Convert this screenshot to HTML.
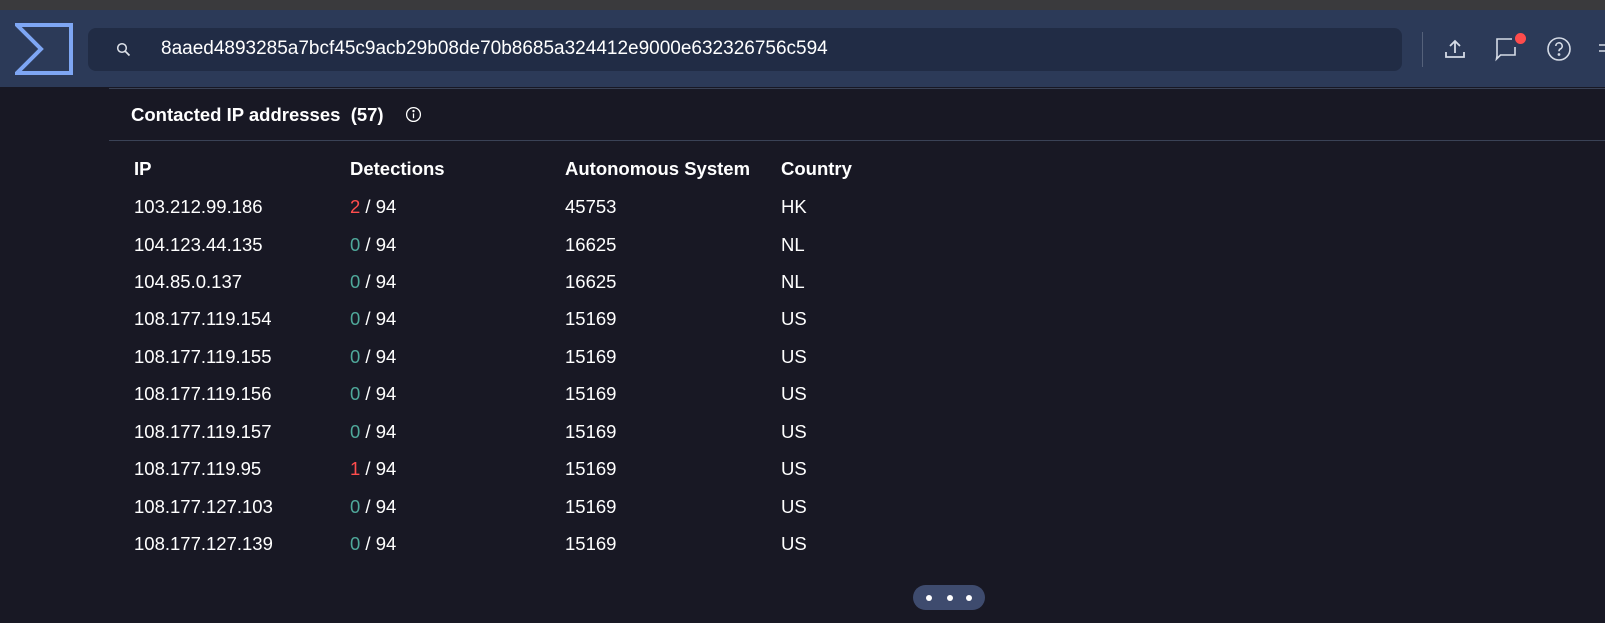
<!DOCTYPE html>
<html><head><style>
body{margin:0;width:1605px;height:623px;background:#181824;font-family:"Liberation Sans",sans-serif;color:#fff;position:relative;overflow:hidden}
.top{position:absolute;left:0;top:0;width:1605px;height:10px;background:#3a3a3d}
.nav{position:absolute;left:0;top:10px;width:1605px;height:77px;background:#2c3a58}
.search{position:absolute;left:88px;top:28px;width:1314px;height:43px;background:#212c45;border-radius:8px}
.hash{position:absolute;left:161px;top:38px;font-size:19px;color:#fff}
.sep{position:absolute;left:1422px;top:32px;width:1px;height:35px;background:#55617a}
.l1{position:absolute;left:109px;top:88px;right:0;height:1px;background:#3a4256}
.l2{position:absolute;left:109px;top:140px;right:0;height:1px;background:#3a4256}
.title{position:absolute;left:131px;top:104px;font-size:18.5px;font-weight:bold}
.c{position:absolute;font-size:18.5px;white-space:nowrap;line-height:22px}
.h{font-weight:bold;top:158px}
.r{color:#ff4d4d}.g{color:#4fa89a}
.pill{position:absolute;left:913px;top:585px;width:72px;height:25px;border-radius:12.5px;background:#3e4b6e}
.dot{position:absolute;top:9.5px;width:6px;height:6px;border-radius:3px;background:#fff}
</style></head><body>
<div class="top"></div>
<div class="nav">
<svg style="position:absolute;left:15px;top:13px" width="58" height="52" viewBox="0 0 58 52"><path d="M2 2 H56 V50 H2 L26 26 Z" fill="none" stroke="#7ea6f4" stroke-width="4"/></svg>
</div>
<div class="search"></div>
<svg style="position:absolute;left:116px;top:42px" width="16" height="16" viewBox="0 0 16 16"><circle cx="6" cy="6" r="4.3" fill="none" stroke="#dfe3ea" stroke-width="1.5"/><path d="M9.2 9.2 L13.5 13.5" stroke="#dfe3ea" stroke-width="1.7"/></svg>
<div class="hash">8aaed4893285a7bcf45c9acb29b08de70b8685a324412e9000e632326756c594</div>
<div class="sep"></div>
<svg style="position:absolute;left:1443px;top:37px" width="24" height="24" viewBox="0 0 24 24" fill="none" stroke="#d5dbe6" stroke-width="1.8"><path d="M12 16V4M7 9l5-5 5 5M3 15v5h18v-5"/></svg>
<svg style="position:absolute;left:1494px;top:35px" width="28" height="28" viewBox="0 0 28 28" fill="none" stroke="#d5dbe6" stroke-width="1.6"><path d="M18 4H3v17l-0.5 3 4-4H21V12"/></svg>
<div style="position:absolute;left:1515px;top:33px;width:11px;height:11px;border-radius:6px;background:#ff4c4c"></div>
<svg style="position:absolute;left:1546px;top:36px" width="26" height="26" viewBox="0 0 26 26" fill="none" stroke="#d5dbe6" stroke-width="1.6"><circle cx="13" cy="13" r="11"/><path d="M9.8 10a3.2 3.2 0 1 1 4.6 2.9c-1 .5-1.4 1.2-1.4 2.3"/><circle cx="13" cy="18.5" r="0.6" fill="#d5dbe6"/></svg>
<svg style="position:absolute;left:1598px;top:39px" width="7" height="20"><path d="M1 6h7M1 12h7" stroke="#d5dbe6" stroke-width="1.6"/></svg>
<div class="l1"></div>
<div class="title">Contacted IP addresses&nbsp;&nbsp;(57)</div>
<svg style="position:absolute;left:405px;top:106px" width="17" height="17" viewBox="0 0 16 16" fill="none" stroke="#fff" stroke-width="1.2"><circle cx="8" cy="8" r="6.5"/><path d="M8 7v4.5"/><circle cx="8" cy="4.8" r="0.5" fill="#fff"/></svg>
<div class="l2"></div>
<div class="c h" style="left:134px">IP</div>
<div class="c h" style="left:350px">Detections</div>
<div class="c h" style="left:565px">Autonomous System</div>
<div class="c h" style="left:781px">Country</div>
<div class="pill"><div class="dot" style="left:13px"></div><div class="dot" style="left:34px"></div><div class="dot" style="left:53px"></div></div>
<div class="c" style="left:134px;top:196px">103.212.99.186</div><div class="c" style="left:350px;top:196px"><span class="r">2</span> / 94</div><div class="c" style="left:565px;top:196px">45753</div><div class="c" style="left:781px;top:196px">HK</div>
<div class="c" style="left:134px;top:234px">104.123.44.135</div><div class="c" style="left:350px;top:234px"><span class="g">0</span> / 94</div><div class="c" style="left:565px;top:234px">16625</div><div class="c" style="left:781px;top:234px">NL</div>
<div class="c" style="left:134px;top:271px">104.85.0.137</div><div class="c" style="left:350px;top:271px"><span class="g">0</span> / 94</div><div class="c" style="left:565px;top:271px">16625</div><div class="c" style="left:781px;top:271px">NL</div>
<div class="c" style="left:134px;top:308px">108.177.119.154</div><div class="c" style="left:350px;top:308px"><span class="g">0</span> / 94</div><div class="c" style="left:565px;top:308px">15169</div><div class="c" style="left:781px;top:308px">US</div>
<div class="c" style="left:134px;top:346px">108.177.119.155</div><div class="c" style="left:350px;top:346px"><span class="g">0</span> / 94</div><div class="c" style="left:565px;top:346px">15169</div><div class="c" style="left:781px;top:346px">US</div>
<div class="c" style="left:134px;top:383px">108.177.119.156</div><div class="c" style="left:350px;top:383px"><span class="g">0</span> / 94</div><div class="c" style="left:565px;top:383px">15169</div><div class="c" style="left:781px;top:383px">US</div>
<div class="c" style="left:134px;top:421px">108.177.119.157</div><div class="c" style="left:350px;top:421px"><span class="g">0</span> / 94</div><div class="c" style="left:565px;top:421px">15169</div><div class="c" style="left:781px;top:421px">US</div>
<div class="c" style="left:134px;top:458px">108.177.119.95</div><div class="c" style="left:350px;top:458px"><span class="r">1</span> / 94</div><div class="c" style="left:565px;top:458px">15169</div><div class="c" style="left:781px;top:458px">US</div>
<div class="c" style="left:134px;top:496px">108.177.127.103</div><div class="c" style="left:350px;top:496px"><span class="g">0</span> / 94</div><div class="c" style="left:565px;top:496px">15169</div><div class="c" style="left:781px;top:496px">US</div>
<div class="c" style="left:134px;top:533px">108.177.127.139</div><div class="c" style="left:350px;top:533px"><span class="g">0</span> / 94</div><div class="c" style="left:565px;top:533px">15169</div><div class="c" style="left:781px;top:533px">US</div>
</body></html>
